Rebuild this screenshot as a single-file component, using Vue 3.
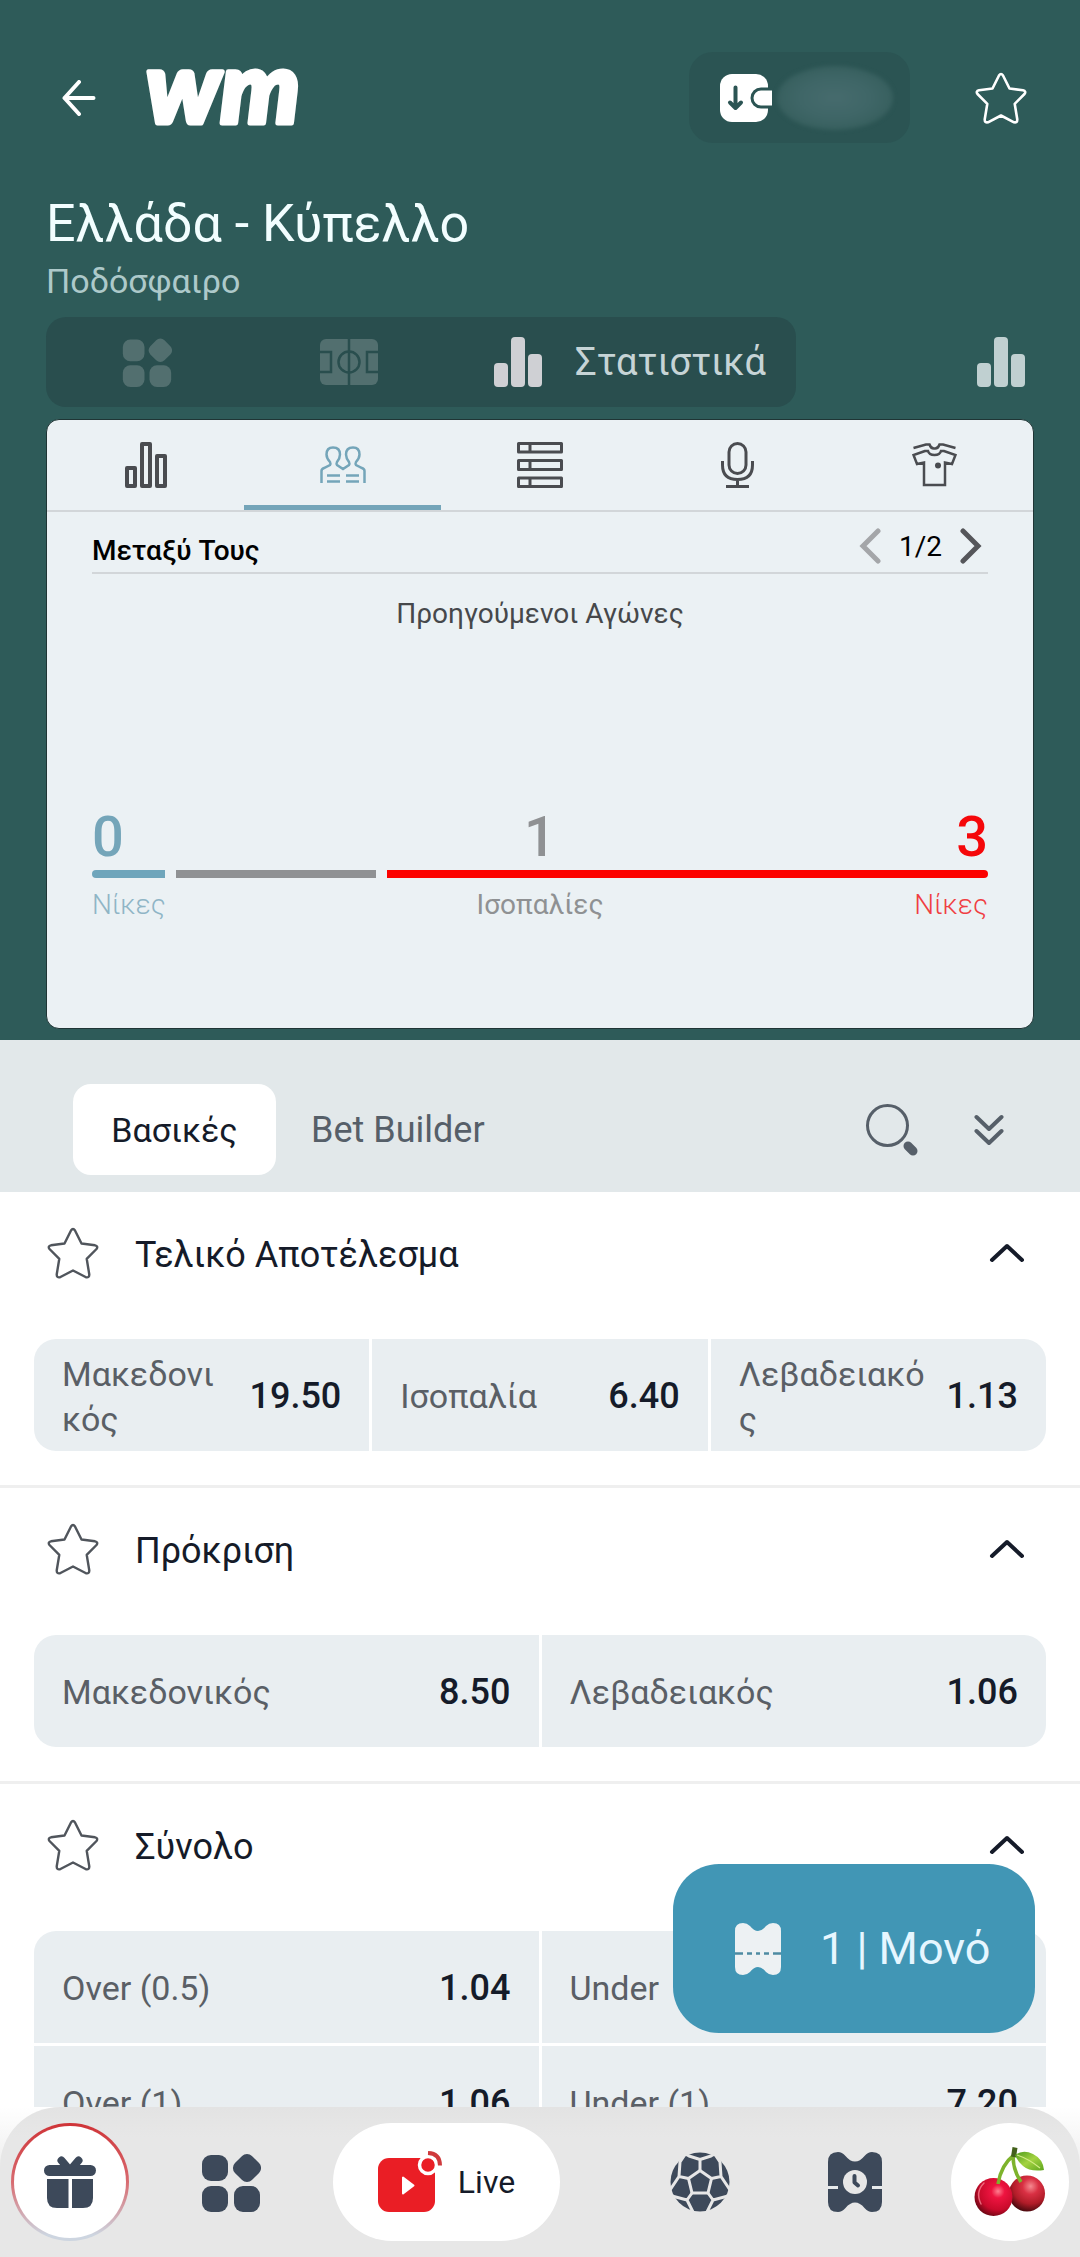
<script setup>
import { ref } from 'vue'

const activeStatsTab = ref('h2h')
const statsTabs = [
  { id: 'chart', label: 'Διάγραμμα', w: 42, h: 46 },
  { id: 'h2h', label: 'Μεταξύ Τους', w: 46, h: 38 },
  { id: 'table', label: 'Βαθμολογία', w: 46, h: 46 },
  { id: 'mic', label: 'Σχολιασμός', w: 33, h: 46 },
  { id: 'shirt', label: 'Συνθέσεις', w: 45, h: 44 },
]

const markets = [
  {
    title: 'Τελικό Αποτέλεσμα',
    columns: 3,
    cells: [
      { name: 'Μακεδονικός', odds: '19.50' },
      { name: 'Ισοπαλία', odds: '6.40' },
      { name: 'Λεβαδειακός', odds: '1.13' },
    ],
  },
  {
    title: 'Πρόκριση',
    columns: 2,
    cells: [
      { name: 'Μακεδονικός', odds: '8.50' },
      { name: 'Λεβαδειακός', odds: '1.06' },
    ],
  },
  {
    title: 'Σύνολο',
    columns: 2,
    cells: [
      { name: 'Over (0.5)', odds: '1.04' },
      { name: 'Under', odds: '' },
      { name: 'Over (1)', odds: '1.06' },
      { name: 'Under (1)', odds: '7.20' },
    ],
  },
]
</script>

<template>
  <div class="app">
    <svg class="sprite" aria-hidden="true">
      <symbol id="star" viewBox="0 0 52 52">
        <path d="M24 3.5Q26 0.5 28 3.5L34.5 16.5L48 18.3Q51.500 19.200 49.500 22L39.700 31.800L42.300 47.500Q42.300 51 39 50.300L26 43.500L13 50.300Q9.700 51 9.700 47.500L12.300 31.800L2.500 22Q0.500 19.200 4 18.300L17.500 16.500Z" fill="none" stroke="currentColor" stroke-linejoin="round" />
      </symbol>
      <symbol id="tiles" viewBox="0 0 60 60">
        <rect x="1" y="3" width="26" height="26" rx="9" />
        <rect x="1" y="34" width="26" height="26" rx="9" />
        <rect x="33" y="34" width="26" height="26" rx="9" />
        <rect x="34" y="4" width="24" height="24" rx="7" transform="rotate(45 46 16)" />
      </symbol>
      <symbol id="bars" viewBox="0 0 48 50">
        <rect x="0" y="26" width="14" height="24" rx="4" />
        <rect x="17" y="0" width="14" height="50" rx="4" />
        <rect x="34" y="17" width="14" height="33" rx="4" />
      </symbol>
      <symbol id="chart" viewBox="0 0 42 46">
        <path d="M2 26H10V44H2ZM17 2H25V44H17ZM32 14H40V44H32Z" fill="none" stroke="currentColor" stroke-width="4" stroke-linejoin="round" />
      </symbol>
      <symbol id="h2h" viewBox="0 0 46 38">
        <path d="M1.500 37V25Q1.500 23 4 22L10 19Q11 18 10 16Q6.500 12 6.500 8.500Q6.500 1.500 13 1.500Q20 1.500 20 8.500Q20 12 17 16Q16 18 17 19L23 23L29 19Q30 18 29 16Q26 12 26 8.500Q26 1.500 33 1.500Q39.500 1.500 39.500 8.500Q39.500 12 36 16Q35 18 36 19L42 22Q44.500 23 44.500 25V37M7 29.500H20M7 35.500H20M26 29.500H39M26 35.500H39" fill="none" stroke="currentColor" stroke-width="2.500" />
      </symbol>
      <symbol id="table" viewBox="0 0 46 46">
        <path d="M1.500 1.500H44.500V10H1.500ZM1.500 18.500H44.500V27.500H1.500ZM1.500 36H44.500V44.500H1.500ZM13 1.500V10M13 18.500V27.500M13 36V44.500" fill="none" stroke="currentColor" stroke-width="3" stroke-linejoin="round" />
      </symbol>
      <symbol id="mic" viewBox="0 0 33 46">
        <rect x="8" y="1.500" width="17" height="30" rx="8.500" fill="none" stroke="currentColor" stroke-width="3" />
        <path d="M1.500 19V23Q1.500 37.500 16.500 37.500Q31.500 37.500 31.500 23V19M16.500 37.500V44M5 44.500H28" fill="none" stroke="currentColor" stroke-width="3" />
      </symbol>
      <symbol id="shirt" viewBox="0 0 45 44">
        <path d="M1.500 5L14 1.500H17.500Q19 6 22.500 5.500Q26 6 27.500 1.500H31L43.500 5M13 8L1.500 12L5 21L12 19.500V42H33V19.500L40 21L43.500 12L32 8H29Q28 12 22.500 12Q17 12 16 8Z" fill="none" stroke="currentColor" stroke-width="2.500" />
        <circle cx="26" cy="22.500" r="3" fill="currentColor" />
      </symbol>
    </svg>

    <div class="stage">
      <main class="scroll">
        <header class="hero">
          <div class="topbar">
            <button class="back" aria-label="Πίσω">
              <svg width="34" height="36" viewBox="0 0 34 36"><path d="M17 2L2.500 18L17 34M2.500 18H31.500" fill="none" stroke="#fff" stroke-width="4" stroke-linecap="round" stroke-linejoin="round" /></svg>
            </button>
            <a href="#" class="logo" aria-label="wm">
              <svg width="156" height="60" viewBox="0 0 156 60"><text x="2" y="55" class="logo-text">wm</text></svg>
            </a>
            <button class="wallet" aria-label="Κατάθεση">
              <svg width="52" height="48" viewBox="0 0 52 48">
                <rect width="48" height="48" rx="12" fill="#fff" />
                <rect x="32" y="15" width="30" height="18" rx="9" fill="#fff" stroke="#2b5453" stroke-width="3" />
                <path d="M15.500 13.500V33M10 28.500L15.500 34L21 28.500" fill="none" stroke="#2b5453" stroke-width="4" stroke-linecap="round" stroke-linejoin="round" />
              </svg>
              <span class="balance"></span>
            </button>
            <button class="fav" aria-label="Αγαπημένα"><svg width="52" height="52" stroke-width="2.600"><use href="#star" /></svg></button>
          </div>

          <h1>Ελλάδα - Κύπελλο</h1>
          <p class="sport">Ποδόσφαιρο</p>

          <div class="views">
            <div class="switch">
              <button class="dim" aria-label="Όλα"><svg width="50" height="50"><use href="#tiles" /></svg></button>
              <button class="dim" aria-label="Γήπεδο">
                <svg width="58" height="48" viewBox="0 0 58 48">
                  <rect y="1" width="58" height="46" rx="6" />
                  <g fill="none" stroke="#294e4e" stroke-width="2.500"><path d="M29 0V48M-2 14H11V34H-2M60 14H47V34H60" /><circle cx="29" cy="24" r="10.500" /></g>
                </svg>
              </button>
              <button class="current"><svg width="48" height="50"><use href="#bars" /></svg>Στατιστικά</button>
            </div>
            <button class="stats-toggle" aria-label="Στατιστικά"><svg width="48" height="50"><use href="#bars" /></svg></button>
          </div>

          <section class="card">
            <nav class="card-tabs">
              <button v-for="t in statsTabs" :key="t.id" :aria-label="t.label" :class="{ on: t.id === activeStatsTab }" @click="activeStatsTab = t.id">
                <svg :width="t.w" :height="t.h"><use :href="'#' + t.id" /></svg>
              </button>
            </nav>
            <div class="card-body">
              <div class="card-head">
                <h2>Μεταξύ Τους</h2>
                <div class="pager">
                  <button class="prev" aria-label="Προηγούμενο"><svg width="22" height="36" viewBox="0 0 22 36"><path d="M19 3L4 18L19 33" /></svg></button>
                  <span>1/2</span>
                  <button aria-label="Επόμενο"><svg width="22" height="36" viewBox="0 0 22 36"><path d="M3 3L18 18L3 33" /></svg></button>
                </div>
              </div>
              <h3>Προηγούμενοι Αγώνες</h3>
              <div class="scores"><b class="home">0</b><b class="draw">1</b><b class="away">3</b></div>
              <div class="track"><i class="seg-home"></i><i class="seg-draw"></i><i class="seg-away"></i></div>
              <div class="legend"><span class="home">Νίκες</span><span class="draw">Ισοπαλίες</span><span class="away">Νίκες</span></div>
            </div>
          </section>
        </header>

        <div class="filters">
          <button class="filter on">Βασικές</button>
          <button class="filter">Bet Builder</button>
          <button class="tool search" aria-label="Αναζήτηση">
            <svg width="52" height="52" viewBox="0 0 52 52"><circle cx="21.500" cy="21.500" r="20" fill="none" stroke="#565f69" stroke-width="3" /><path d="M42 42L47 47" stroke="#565f69" stroke-width="9" stroke-linecap="round" /></svg>
          </button>
          <button class="tool" aria-label="Σύμπτυξη όλων">
            <svg width="30" height="32" viewBox="0 0 30 32"><path d="M2.500 3L15 15L27.500 3M2.500 17L15 29L27.500 17" fill="none" stroke="#565f69" stroke-width="4" stroke-linecap="round" stroke-linejoin="round" /></svg>
          </button>
        </div>

        <section v-for="m in markets" :key="m.title" class="market">
          <div class="market-head">
            <button class="mark" aria-label="Αγαπημένο"><svg width="52" height="52" stroke-width="2.400"><use href="#star" /></svg></button>
            <h2>{{ m.title }}</h2>
            <button aria-label="Σύμπτυξη"><svg width="36" height="20" viewBox="0 0 36 20"><path d="M3 17L18 3L33 17" fill="none" stroke="#151b29" stroke-width="4" stroke-linecap="round" stroke-linejoin="round" /></svg></button>
          </div>
          <div class="odds" :class="'cols-' + m.columns">
            <button v-for="c in m.cells" :key="c.name" class="cell"><span>{{ c.name }}</span><b v-if="c.odds">{{ c.odds }}</b></button>
          </div>
        </section>
      </main>

      <button class="slip">
        <svg width="46" height="52" viewBox="0 0 46 52">
          <path d="M0 8Q0 0 8 0Q12 0 15 3Q19 8 23 8Q27 8 31 3Q34 0 38 0Q46 0 46 8V44Q46 52 38 52Q34 52 31 49Q27 44 23 44Q19 44 15 49Q12 52 8 52Q0 52 0 44Z" fill="#edf1f3" />
          <path d="M0 30.500H8M12 30.500H17M21 30.500H25M29 30.500H34M38 30.500H46" stroke="#4d8ba2" stroke-width="2.500" />
        </svg>
        1 | Μονό
      </button>
    </div>

    <div class="dock">
      <nav class="dock-bar">
        <div class="group left">
          <button class="round gift" aria-label="Δώρα">
            <svg width="52" height="52" viewBox="0 0 52 52" fill="#3d495a">
              <path d="M17.500 4.500L23 11M34.500 4.500L29 11" stroke="#3d495a" stroke-width="8" stroke-linecap="round" />
              <rect x="0" y="9" width="52" height="11" rx="5.500" />
              <path d="M3 23H24.500V52H13Q3 52 3 42ZM28 23H49V42Q49 52 39 52H28Z" />
            </svg>
          </button>
          <button class="plain" aria-label="Μενού"><svg width="60" height="60"><use href="#tiles" /></svg></button>
          <button class="live">
            <svg width="64" height="62" viewBox="0 0 64 62">
              <rect y="7" width="57" height="54" rx="11" fill="#ea1e25" />
              <path d="M25 26.500V42.500L35.500 34.500Z" fill="#fff" stroke="#fff" stroke-width="2" stroke-linejoin="round" />
              <circle cx="50" cy="14" r="8.500" fill="#ea1e25" stroke="#fff" stroke-width="3.500" />
              <path d="M50 2Q62 2.500 62 14.500" fill="none" stroke="#cf3a3c" stroke-width="4" />
            </svg>
            Live
          </button>
        </div>
        <div class="group right">
          <button class="plain" aria-label="Αθλήματα">
            <svg width="60" height="60" viewBox="0 0 60 60">
              <circle cx="30" cy="30" r="29.500" />
              <g fill="none" stroke="#e7e7e7" stroke-width="3" stroke-linejoin="round">
                <path d="M30 18.500L41.500 26.500L38 41H22L18.500 26.500Z" />
                <path d="M30 18.500V7.500L19 4L12 0M30 7.500L41 4L48 0M41.500 26.500L51 24.500L50 10L46 4M51 24.500L60 38M18.500 26.500L9 24.500L10 10L14 4M9 24.500L0 38M38 41L43 48L58 44M43 48L37 60M22 41L17 48L2 44M17 48L23 60" />
              </g>
            </svg>
          </button>
          <button class="plain" aria-label="Δελτία">
            <svg width="54" height="60" viewBox="0 0 54 60">
              <path d="M0 10Q0 0 10 0Q14 0 17.500 4Q22 9.500 27 9.500Q32 9.500 36.500 4Q40 0 44 0Q54 0 54 10V50Q54 60 44 60Q40 60 36.500 56Q32 50.500 27 50.500Q22 50.500 17.500 56Q14 60 10 60Q0 60 0 50Z" />
              <path d="M0 35.500H10M44 35.500H54" stroke="#e7eaec" stroke-width="3" />
              <circle cx="27" cy="30" r="12" fill="#e7e7e7" />
              <path d="M26.500 24V30.500L30 33.500" fill="none" stroke="#3d495a" stroke-width="4" stroke-linecap="round" stroke-linejoin="round" />
            </svg>
          </button>
          <button class="round" aria-label="Καζίνο">
            <svg width="72" height="72" viewBox="0 0 72 72">
              <defs>
                <radialGradient id="cherryA" cx=".62" cy=".35" r=".7"><stop offset="0" stop-color="#ff7f90" /><stop offset=".25" stop-color="#ee1440" /><stop offset=".7" stop-color="#c90a2b" /><stop offset="1" stop-color="#680713" /></radialGradient>
                <radialGradient id="cherryB" cx=".6" cy=".3" r=".75"><stop offset="0" stop-color="#f58a90" /><stop offset=".3" stop-color="#d93043" /><stop offset=".65" stop-color="#b01c28" /><stop offset="1" stop-color="#3a060a" /></radialGradient>
                <linearGradient id="leaf" x1="0" y1="0" x2="1" y2="1"><stop offset="0" stop-color="#4c9a1b" /><stop offset=".5" stop-color="#a4d341" /><stop offset="1" stop-color="#5ea51e" /></linearGradient>
              </defs>
              <circle cx="53" cy="47.500" r="18" fill="url(#cherryB)" />
              <circle cx="19.500" cy="51" r="19" fill="url(#cherryA)" />
              <path d="M7 58Q1 46 10 37" fill="none" stroke="#ff8d9c" stroke-width="1.500" stroke-linecap="round" opacity=".7" />
              <path d="M40 9Q27 19 24 38M39 10Q39 24 47 36" fill="none" stroke="#7db32c" stroke-width="3.500" />
              <path d="M41 1.500L39.500 11" stroke="#43611b" stroke-width="5" />
              <path d="M41 9Q49 3 59 8Q69 13 70 24Q56 26 49 20Q44 16 41 9Z" fill="url(#leaf)" />
              <path d="M43 9Q55 13 66 22" fill="none" stroke="#d4ec86" stroke-width="1.200" />
            </svg>
          </button>
        </div>
      </nav>
    </div>
  </div>
</template>

<style>
html, body { margin: 0; background: #fff; }
</style>

<style scoped>
.app { height: 100vh; display: flex; flex-direction: column; font-family: Roboto, "Noto Sans", sans-serif; background: #fff; color: #151b29; }
.sprite { position: absolute; width: 0; height: 0; }
svg { display: block; flex: none; overflow: hidden; }
button { display: flex; align-items: center; justify-content: center; border: 0; padding: 0; margin: 0; background: none; font: inherit; color: inherit; cursor: pointer; }
h1, h2, h3, p { margin: 0; font-weight: 400; }
.stage { position: relative; flex: 1; min-height: 0; }
.scroll { height: 100%; overflow-y: auto; scrollbar-width: none; }

.hero { background: #2e5b59; padding: 52px 46px 11px; }
.topbar { display: flex; align-items: center; height: 91px; padding: 0 7px 0 16px; }
.logo { margin-left: 48px; }
.logo svg { overflow: visible; }
.logo-text { font: italic 900 100px Lato, sans-serif; fill: #fff; stroke: #fff; stroke-width: 5px; stroke-linejoin: round; }
.wallet { margin-left: auto; width: 221px; height: 91px; padding-left: 31px; justify-content: flex-start; border-radius: 24px; background: #2b5453; gap: 5px; }
.balance { width: 116px; height: 64px; border-radius: 50%; background: radial-gradient(closest-side, #466b6d, #3f6667 60%, #38605f); filter: blur(2px); }
.fav { margin-left: 65px; color: #fff; }
h1 { margin-top: 51px; font-size: 52px; line-height: 60px; color: #f2feff; }
.sport { margin-top: 6px; font-size: 34px; line-height: 42px; color: #adc9ca; }
.views { display: flex; align-items: center; justify-content: space-between; margin-top: 15px; padding-right: 9px; }
.switch { display: flex; height: 90px; width: 750px; border-radius: 20px; background: #294e4e; }
.dim { flex: 1; fill: #526f6f; }
.current { flex: none; width: 346px; justify-content: flex-start; gap: 33px; padding-left: 44px; box-sizing: border-box; font-size: 38px; color: #c6d4d6; fill: #cfd0d4; }
.stats-toggle { fill: #c0d0d1; }

.card { margin-top: 12px; border: 1px solid #1f3535; border-radius: 13px; background: #ebf1f4; overflow: hidden; color: #000; }
.card-tabs { display: flex; height: 90px; border-bottom: 2px solid #d2d6d9; }
.card-tabs button { flex: 1; color: #4a4c50; border-bottom: 5px solid transparent; border-top: 5px solid transparent; }
.card-tabs .on { color: #74a5b9; border-bottom-color: #74a5b9; }
.card-body { padding: 0 45px 107px; }
.card-head { display: flex; align-items: center; justify-content: space-between; height: 52px; padding-top: 8px; border-bottom: 2px solid #d2d6d9; }
.card-head h2 { padding-top: 10px; font-size: 28px; font-weight: 500; line-height: 32px; }
.pager { display: flex; align-items: center; gap: 18px; padding-right: 6px; font-size: 28px; }
.pager path { fill: none; stroke: #55565a; stroke-width: 5px; stroke-linecap: round; }
.pager .prev path { stroke: #a4a6a9; }
h3 { margin-top: 24px; font-size: 28px; line-height: 32px; text-align: center; color: #46484b; }
.scores, .legend { display: grid; grid-template-columns: 1fr 1fr 1fr; text-align: center; }
.scores { margin-top: 177px; font-size: 56px; line-height: 60px; }
.scores b { font-weight: 500; }
.legend { margin-top: 11px; font-size: 28px; line-height: 32px; font-weight: 300; }
.home { text-align: left; color: #74a5b9; }
.draw { color: #8f9193; }
.away { text-align: right; color: #f5080a; }
.legend .home { color: #8fb5c6; }
.legend .draw { font-weight: 400; }
.legend .away { color: #f03e42; }
.track { display: flex; gap: 11px; height: 8px; margin-top: 3px; }
.track i { background: #8f9193; }
.track .seg-home { width: 73px; background: #6ea5bb; border-radius: 4px 0 0 4px; }
.seg-draw { flex: 1; }
.track .seg-away { flex: 3; background: #fc0200; border-radius: 0 4px 4px 0; }

.filters { display: flex; align-items: center; padding: 44px 76px 17px 73px; background: #e2e8ea; }
.filter { height: 91px; padding: 0 35px; font-size: 36px; color: #565f69; }
.filter.on { width: 203px; padding: 0; border-radius: 18px; background: #fff; font-size: 34px; color: #151b29; }
.search { margin: 0 56px 0 auto; }

.market { padding-bottom: 34px; border-bottom: 3px solid #efefef; }
.market-head { display: flex; align-items: center; height: 122px; padding: 0 55px 0 47px; }
.market-head h2 { flex: 1; margin-left: 36px; padding-top: 4px; font-size: 36px; line-height: 46px; }
.mark { color: #50555c; }
.odds { display: grid; gap: 3px; margin: 25px 34px 0; border-radius: 22px; overflow: hidden; }
.cols-3 { grid-template-columns: repeat(3, minmax(0, 1fr)); }
.cols-2 { grid-template-columns: repeat(2, minmax(0, 1fr)); }
.cell { box-sizing: border-box; height: 112px; padding: 3px 28px 0; gap: 20px; background: #e9eef1; font-size: 34px; line-height: 45px; text-align: left; }
.cell span { flex: 1; min-width: 0; word-break: break-all; color: #5a5f66; }
.cell b { font-size: 36px; font-weight: 500; color: #151b29; }

.slip { position: absolute; right: 45px; bottom: 74px; width: 362px; height: 169px; padding-left: 62px; justify-content: flex-start; gap: 39px; border-radius: 46px; background: #4196b5; color: #e6f6ff; font-size: 45px; }

.dock { flex: none; background: linear-gradient(#fff, #e7e7e7 60%); }
.dock-bar { display: flex; justify-content: space-between; padding: 16px 11px; border-radius: 60px 60px 0 0; background: linear-gradient(#e3e3e3, #e7e7e7 30px); }
.group { display: flex; }
.left { gap: 43px; }
.right { gap: 37px; }
.plain, .round { width: 118px; height: 118px; fill: #3d495a; }
.round { border-radius: 50%; background: #fff; }
.gift { box-sizing: border-box; border: 3px solid transparent; background: linear-gradient(#fff, #fff) padding-box, linear-gradient(#cf3337, #d86b70 50%, #cdd5e0 95%) border-box; }
.live { height: 118px; width: 227px; gap: 16px; border-radius: 59px; background: #fff; font-size: 32px; }
</style>
